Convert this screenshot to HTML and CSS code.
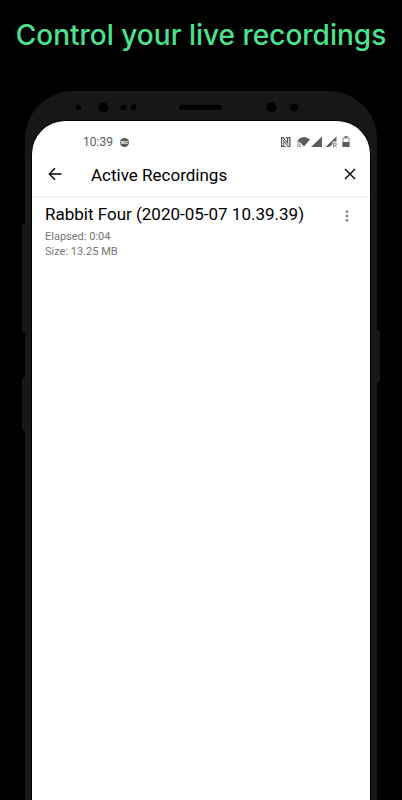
FILE: index.html
```html
<!DOCTYPE html>
<html lang="en">
<head>
    <meta charset="UTF-8">
    <meta name="viewport" content="width=device-width, initial-scale=1.0">
    <title>Active Recordings</title>
    <link rel="stylesheet" href="styles.css">
</head>
<body>
    <h1 class="headline">Control your live recordings</h1>

    <div class="phone">
        <span class="side-button volume"></span>
        <span class="side-button assistant"></span>
        <span class="side-button power"></span>

        <svg class="sensors" viewBox="0 0 352 29" aria-hidden="true">
            <circle cx="53.5" cy="16.5" r="2.5"/>
            <circle cx="78" cy="16.5" r="5"/>
            <circle cx="98.5" cy="16.5" r="3"/>
            <circle cx="108.5" cy="16.5" r="3"/>
            <rect x="154" y="14" width="43" height="5" rx="2.5"/>
            <circle cx="246.5" cy="16.5" r="5"/>
            <circle cx="269" cy="16.5" r="4"/>
        </svg>

        <div class="screen">
            <div class="status-bar">
                <span class="time">10:39</span>
                <span class="rec">REC</span>
                <svg class="status-icons" width="70" height="12" viewBox="0 0 70 12" aria-hidden="true">
                    <!-- NFC -->
                    <path d="M1 1H3.5L7 5.5V2.5L5 1H10.5V11H8L4.2 6.3V9.5L6.5 11H1Z"/>
                    <path class="nfc-line" d="M2.8 9.8V2.6L8.7 9.6V2.2"/>
                    <!-- wifi -->
                    <path d="M18 3.5Q24 -1.5 30 3.5L24 10.5L20.6 6.5H18.8Z"/>
                    <path d="M17.3 5h1.2v1.2h-1.2zM17.3 7.5h1.2v1.2h-1.2zM19.3 7.5h1.2v1.2h-1.2zM17.3 9.8h1.2V11h-1.2zM19.3 9.8h1.2V11h-1.2z"/>
                    <!-- signal -->
                    <path d="M42 0.5V11H31Z"/>
                    <path d="M56.5 0.5V5.5H52.5V8L49.5 11H45.5Z"/>
                    <path class="roaming" d="M53.5 11.5V7H55Q56.5 7 56.5 8.2T55 9.3H53.5M55 9.3L56.6 11.5"/>
                    <!-- battery -->
                    <path class="battery" d="M63 2H69V10.5H63Z"/>
                    <path d="M64.3 0.3h3.4v1.5h-3.4zM62.5 6h7v5h-7z"/>
                </svg>
            </div>

            <header class="toolbar">
                <button class="icon-button" type="button" aria-label="Back">
                    <svg width="14" height="14" viewBox="0 0 14 14"><path d="M13.5 7H1.5M7 1.3L1.3 7L7 12.7"/></svg>
                </button>
                <h2 class="title">Active Recordings</h2>
                <button class="icon-button" type="button" aria-label="Close">
                    <svg width="12" height="12" viewBox="0 0 12 12"><path d="M1 1L11 11M11 1L1 11"/></svg>
                </button>
            </header>

            <main class="recording">
                <div class="details">
                    <h3 class="name">Rabbit Four (2020-05-07 10.39.39)</h3>
                    <p class="meta">Elapsed: 0:04</p>
                    <p class="meta">Size: 13.25 MB</p>
                </div>
                <button class="icon-button more" type="button" aria-label="More options">
                    <svg width="4" height="12" viewBox="0 0 4 12"><circle cx="2" cy="1.7" r="1.4"/><circle cx="2" cy="6" r="1.4"/><circle cx="2" cy="10.3" r="1.4"/></svg>
                </button>
            </main>
        </div>
    </div>
</body>
</html>
```

FILE: styles.css
```css
body {
    margin: 0;
    min-height: 100vh;
    display: flex;
    flex-direction: column;
    background-color: #000;
    font-family: Roboto, sans-serif;
}

h1, h2, h3, p {
    margin: 0;
}

.headline {
    padding: 15px 0 36px;
    color: #4fe08f;
    font-family: Inter, sans-serif;
    font-size: 28px;
    font-weight: 500;
    line-height: 40px;
    text-align: center;
    white-space: nowrap;
}

/* Phone body */
.phone {
    position: relative;
    flex: 1;
    display: flex;
    flex-direction: column;
    margin: 0 25px;
    padding: 0 6px;
    background-color: #171717;
    border-radius: 48px 48px 0 0;
}

.sensors {
    display: block;
    margin: 0 -6px;
    fill: #000;
}

.side-button {
    position: absolute;
    left: -3px;
    width: 3px;
    background-color: #171717;
    border-radius: 2px 0 0 2px;
}

.volume {
    top: 133px;
    height: 109px;
}

.assistant {
    top: 286px;
    height: 54px;
}

.power {
    top: 239px;
    left: auto;
    right: -3px;
    height: 53px;
    border-radius: 0 2px 2px 0;
}

/* Screen */
.screen {
    flex: 1;
    border: 1px solid #000;
    border-bottom: 0;
    background-color: #fff;
    border-radius: 34px 34px 0 0;
}

.status-bar {
    display: flex;
    align-items: center;
    padding: 12px 20px 0 51px;
    height: 18px;
    color: #5c5c5c;
}

.time {
    font-size: 12px;
    line-height: 16px;
}

.rec {
    width: 9px;
    height: 9px;
    margin-left: 7px;
    background-color: #5c5c5c;
    border-radius: 50%;
    color: #fff;
    font-size: 4px;
    font-weight: 700;
    line-height: 9px;
    text-align: center;
}

.status-icons {
    margin-left: auto;
    fill: #5c5c5c;
}

.nfc-line {
    fill: none;
    stroke: #fff;
}

.roaming, .battery {
    fill: none;
    stroke: #8a8a8a;
}

.toolbar {
    display: flex;
    align-items: center;
    height: 45px;
    padding: 0 10px 0 13px;
    border-bottom: 2px solid #f2f2f2;
}

.title {
    flex: 1;
    padding: 2px 0 0 26px;
    color: #000;
    font-size: 17px;
    font-weight: 400;
    line-height: 20px;
}

.icon-button {
    display: flex;
    align-items: center;
    justify-content: center;
    width: 20px;
    height: 20px;
    padding: 0;
    border: 0;
    background: none;
    fill: none;
    stroke: #000;
    stroke-width: 1.4;
    cursor: pointer;
}

.recording {
    display: flex;
    align-items: flex-start;
    padding: 6px 13px;
}

.details {
    flex: 1;
}

.name {
    margin-bottom: 5px;
    color: #000;
    font-size: 17px;
    font-weight: 400;
    line-height: 20px;
    white-space: nowrap;
}

.meta {
    color: #757575;
    font-size: 11px;
    line-height: 15px;
}

.more {
    margin-top: 2px;
    fill: #858585;
    stroke: none;
}
```
